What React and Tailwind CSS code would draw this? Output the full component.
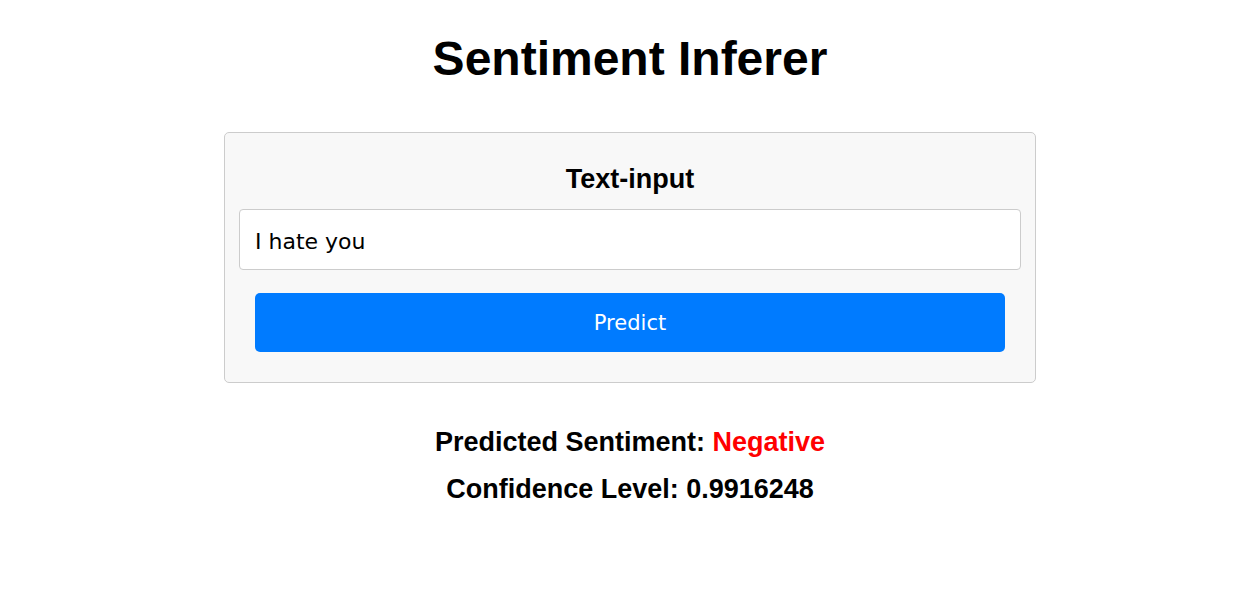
import React, { useState } from "react";

const App = () => {
  const [text, setText] = useState("I hate you");

  return (
    <div className="min-h-screen bg-white pl-[26px] font-['Liberation_Sans',Arial,sans-serif] text-black">
      <div className="flex flex-col items-center pt-[30px]">

        <h1 className="text-[48px] font-bold leading-[58px]">Sentiment Inferer</h1>

        {/* input card */}
        <div className="mt-[44px] flex w-[812px] flex-col items-center rounded-[5px] border border-[#cccccc] bg-[#f8f8f8] px-[14px] pt-[30px] pb-[30px]">
          <h3 className="text-[27px] font-bold leading-[32px]">Text-input</h3>

          <input
            value={text}
            onChange={(e) => setText(e.target.value)}
            className="mt-[14px] h-[61px] w-full rounded-[4px] border border-[#cccccc] bg-white px-[15px] pt-[3px] font-['DejaVu_Sans',Tahoma,sans-serif] text-[22px] text-black outline-none"
          />

          <button className="mt-[23px] h-[59px] w-[750px] rounded-[5px] bg-[#007bff] pt-[3px] font-['DejaVu_Sans',Tahoma,sans-serif] text-[21px] text-white">
            Predict
          </button>
        </div>

        {/* result */}
        <div className="mt-[42px] flex flex-col items-center gap-[13px] text-[27px] font-bold leading-[34px]">
          <p>
            Predicted Sentiment: <span className="text-[#ff0000]">Negative</span>
          </p>
          <p>Confidence Level: 0.9916248</p>
        </div>

      </div>
    </div>
  );
};

export default App;
